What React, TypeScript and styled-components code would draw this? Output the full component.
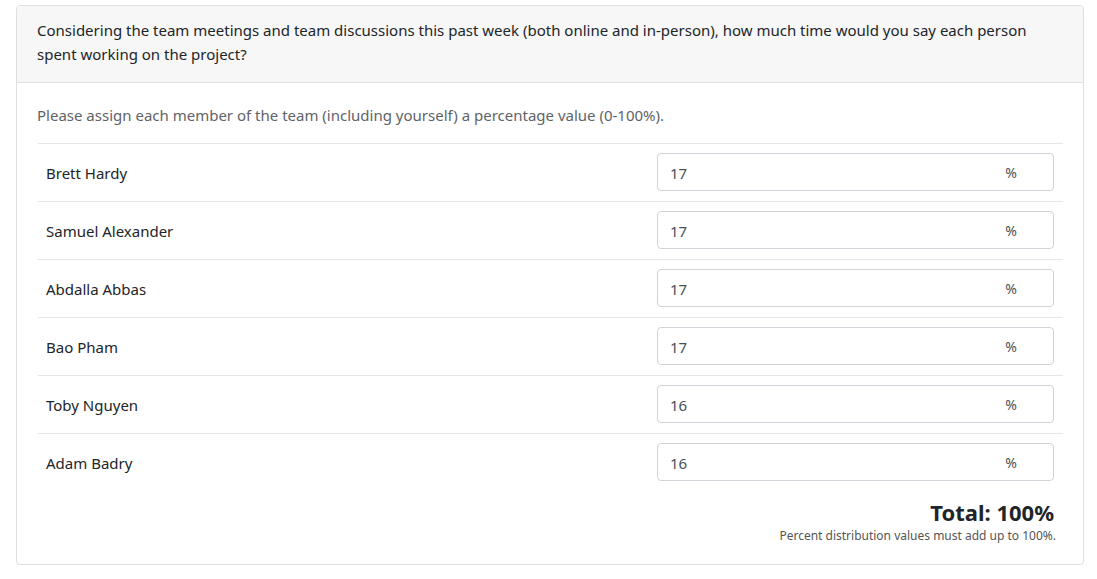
import React from "react";
import styled, { createGlobalStyle } from "styled-components";

const Global = createGlobalStyle`
  body {
    margin: 0;
    background: #ffffff;
    font-family: "Noto Sans", "Open Sans", sans-serif;
    color: #212529;
  }
`;

const Page = styled.div`
  padding: 5px 13px 14px 16px;
`;

const Card = styled.div`
  border: 1px solid #dfdfdf;
  border-radius: 4px;
  background: #fff;
  overflow: hidden;
`;

const Header = styled.div`
  background: #f7f7f7;
  border-bottom: 1px solid #dfdfdf;
  padding: 12px 20px 16px 20px;
  font-size: 15px;
  line-height: 24px;
  color: #212529;
`;

const Body = styled.div`
  padding: 20px 20px 19px 20px;
`;

const Hint = styled.p`
  margin: 0 0 16px 0;
  font-size: 15px;
  line-height: 24px;
  color: #5f6368;
`;

const Table = styled.div`
  display: flex;
  flex-direction: column;
  margin-left: 1px;
`;

const Row = styled.div`
  display: grid;
  grid-template-columns: 1fr 414px;
  border-top: 1px solid #e6e6e6;
  align-items: center;
`;

const NameCell = styled.div`
  padding: 0 8px;
  font-size: 15px;
  color: #212529;
`;

const InputCell = styled.div`
  padding: 9px 9px 10px 8px;
`;

const InputBox = styled.div`
  display: flex;
  align-items: center;
  height: 36px;
  border: 1px solid #ced4da;
  border-radius: 4px;
  padding: 0 36px 0 12px;
  font-size: 15px;
  color: #495057;
`;

const Value = styled.span`
  flex: 1;
  padding-top: 2px;
`;

const Suffix = styled.span`
  color: #495057;
  font-size: 14px;
`;

const Footer = styled.div`
  display: flex;
  flex-direction: column;
  align-items: flex-end;
  padding-right: 7px;
  margin-top: 6px;
`;

const Total = styled.div`
  font-size: 22px;
  font-weight: 700;
  line-height: 30px;
  color: #212529;
  padding-right: 2px;
`;

const Note = styled.div`
  font-size: 12px;
  line-height: 18px;
  color: #555;
`;

const members: [string, number][] = [
  ["Brett Hardy", 17],
  ["Samuel Alexander", 17],
  ["Abdalla Abbas", 17],
  ["Bao Pham", 17],
  ["Toby Nguyen", 16],
  ["Adam Badry", 16],
];

export default function App() {
  return (
    <>
      <Global />
      <Page>
        <Card>
          <Header>
            Considering the team meetings and team discussions this past week (both online and in-person), how much time would you say each person spent working on the project?
          </Header>
          <Body>
            <Hint>Please assign each member of the team (including yourself) a percentage value (0-100%).</Hint>
            <Table>
              {members.map(([name, v]) => (
                <Row key={name}>
                  <NameCell>{name}</NameCell>
                  <InputCell>
                    <InputBox>
                      <Value>{v}</Value>
                      <Suffix>%</Suffix>
                    </InputBox>
                  </InputCell>
                </Row>
              ))}
            </Table>
            <Footer>
              <Total>Total: 100%</Total>
              <Note>Percent distribution values must add up to 100%.</Note>
            </Footer>
          </Body>
        </Card>
      </Page>
    </>
  );
}
